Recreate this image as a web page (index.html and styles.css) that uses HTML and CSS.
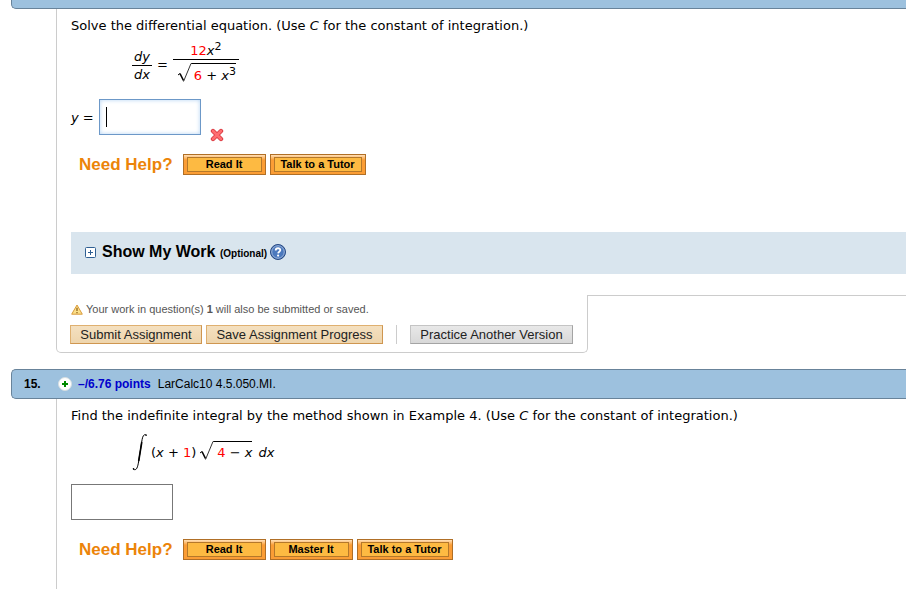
FILE: index.html
```html
<!DOCTYPE html>
<html lang="en">
<head>
    <meta charset="UTF-8">
    <meta name="viewport" content="width=device-width, initial-scale=1.0">
    <title>Assignment</title>
    <link rel="stylesheet" href="styles.css">
</head>
<body>
    <div class="bar bar-first"></div>
    <div class="question">
        <p class="prompt">Solve the differential equation. (Use <i>C</i> for the constant of integration.)</p>
        <div class="equation">
            <span class="fraction">
                <span class="top"><i>dy</i></span>
                <span class="bottom"><i>dx</i></span>
            </span>
            <span class="equals">=</span>
            <span class="fraction wide">
                <span class="top"><b>12</b><i>x</i><sup>2</sup></span>
                <span class="bottom">
                    <span class="root">
                        <svg width="14" height="20" viewBox="0 0 14 20"><path d="M0 12 2 10.500" stroke-width="1"/><path d="M2 10.500 5.500 17.500" stroke-width="1.600"/><path d="M5.500 18.500 13 .5H14" stroke-width=".8"/></svg>
                        <span class="radicand"><b>6</b> + <i>x</i><sup>3</sup></span>
                    </span>
                </span>
            </span>
        </div>
        <div class="answer">
            <label for="answer-y"><i>y</i> =</label>
            <input type="text" id="answer-y" class="focused" autofocus>
            <svg class="wrong" width="14" height="14" viewBox="0 0 14 14"><path d="M3 3 11 11M11 3 3 11" stroke="#d93a42" stroke-width="4.400" stroke-linecap="round"/><path d="M3 3 11 11M11 3 3 11" stroke="#ff6d70" stroke-width="2.600" stroke-linecap="round"/></svg>
        </div>
        <div class="help">
            <span class="help-title">Need Help?</span>
            <button class="help-button"><span>Read It</span></button>
            <button class="help-button tutor"><span>Talk to a Tutor</span></button>
        </div>
        <div class="show-work">
            <svg width="11" height="11" viewBox="0 0 11 11"><rect x=".5" y=".5" width="10" height="10" rx="1" fill="#fff" stroke="#2f5f92"/><path d="M3 5.500H8M5.500 3V8" stroke="#2f5f92"/></svg>
            <h2>Show My Work <small>(Optional)</small></h2>
            <svg width="16" height="16" viewBox="0 0 16 16"><circle cx="8" cy="8" r="7.500" fill="#355fa8" stroke="#274a84"/><circle cx="8" cy="8" r="6.300" fill="#4b78bd" stroke="#b9cbe6" stroke-width=".8"/><path d="M5.700 6.400C5.700 3.500 10.500 3.600 10.300 6.200 10.200 7.700 8.200 7.700 8.100 9.400" fill="none" stroke="#fff" stroke-width="1.800"/><circle cx="8.100" cy="11.600" r="1.100" fill="#fff"/></svg>
        </div>
    </div>
    <div class="footer">
        <div class="actions">
            <p class="notice">
                <svg width="12" height="11" viewBox="0 0 12 11"><path d="M6 1 11.300 10.200H.7Z" fill="#fbe08a" stroke="#d99a3a" stroke-linejoin="round"/><path d="M6 3.800V7M6 8V9.200" stroke="#8a5a14" stroke-width="1.200"/></svg>
                <span>Your work in question(s) <strong>1</strong> will also be submitted or saved.</span>
            </p>
            <div class="buttons">
                <button class="submit">Submit Assignment</button>
                <button class="submit save">Save Assignment Progress</button>
                <span class="divider"></span>
                <button class="practice">Practice Another Version</button>
            </div>
        </div>
        <div class="rest"></div>
    </div>

    <div class="bar">
        <span class="number">15.</span>
        <svg width="14" height="14" viewBox="0 0 14 14"><circle cx="7" cy="7" r="6.500" fill="#fff" stroke="#d5dde0"/><path d="M4 7H10M7 4V10" stroke="#008a00" stroke-width="2"/></svg>
        <a href="#" class="points">–/6.76 points</a>
        <span>LarCalc10 4.5.050.MI.</span>
    </div>
    <div class="question last">
        <p class="prompt">Find the indefinite integral by the method shown in Example 4. (Use <i>C</i> for the constant of integration.)</p>
        <div class="equation integral">
            <svg width="16" height="38" viewBox="0 0 16 38"><path d="M14.500 2.500C11.500 0 10.400 4 9.700 9L6.700 28C5.800 34 4.600 38.500 1 36" stroke-width="1"/><path d="M9.800 9 6.700 28" stroke-width="1.600"/><circle cx="14" cy="2" r=".8" fill="#000" stroke="none"/><circle cx="1.500" cy="35.800" r=".8" fill="#000" stroke="none"/></svg>
            <span class="integrand">(<i>x</i> + <b>1</b>)</span>
            <span class="root">
                <svg width="14" height="20" viewBox="0 0 14 20"><path d="M0 12 2 10.500" stroke-width="1"/><path d="M2 10.500 5.500 17.500" stroke-width="1.600"/><path d="M5.500 18.500 13 .5H14" stroke-width=".8"/></svg>
                <span class="radicand"><b>4</b> − <i>x</i></span>
            </span>
            <i class="dx">dx</i>
        </div>
        <div class="answer">
            <input type="text" aria-label="Answer">
        </div>
        <div class="help">
            <span class="help-title">Need Help?</span>
            <button class="help-button"><span>Read It</span></button>
            <button class="help-button"><span>Master It</span></button>
            <button class="help-button tutor"><span>Talk to a Tutor</span></button>
        </div>
    </div>
</body>
</html>
```
FILE: styles.css
```css
* { box-sizing: border-box; }
body {
    margin: 0;
    padding-left: 11px;
    min-height: 100vh;
    display: flex;
    flex-direction: column;
    background: #fff;
    color: #000;
    font-family: "Liberation Sans", Arial, sans-serif;
    font-size: 12px;
}
p, h2 { margin: 0; }
svg { flex: none; }
button {
    font-family: inherit;
    margin: 0;
    padding: 0;
    white-space: nowrap;
}

/* question header */
.bar {
    display: flex;
    align-items: center;
    flex: none;
    height: 30px;
    padding-left: 12px;
    background: #9dc1de;
    border: 1px solid #68839a;
    border-right: 0;
    border-radius: 5px 0 0 5px;
}
.bar-first { margin-top: -21px; }
.number {
    width: 34px;
    font-weight: bold;
}
.points {
    margin: 0 7px 0 6px;
    color: #0000cc;
    font-weight: bold;
    text-decoration: none;
}

.question {
    margin-left: 45px;
    padding: 8px 0 21px 14px;
    border-left: 1px solid #ccc;
}
.last { flex: 1; }
.prompt, .equation, .answer {
    font-family: Verdana, "DejaVu Sans", sans-serif;
    font-size: 13px;
}
.prompt { line-height: 18px; }

/* math */
.equation {
    display: flex;
    align-items: flex-end;
    margin: 7px 0 16px 61px;
}
.equation b {
    color: #f00;
    font-weight: normal;
}
.equation svg {
    fill: none;
    stroke: #000;
}
.fraction {
    display: flex;
    flex-direction: column;
    text-align: center;
    line-height: 16px;
}
.fraction .top {
    padding: 1px 2px 0;
    border-bottom: 1px solid #000;
}
.fraction .bottom { padding-top: 1px; }
.equals {
    padding: 0 5px;
    line-height: 36px;
}
.wide .bottom { padding: 3px 3px 0 5px; }
.root { display: flex; }
.radicand {
    padding: 4px 0 0 2px;
    border-top: 1px solid #000;
    line-height: 15px;
}
sup {
    font-size: 11px;
    line-height: 0;
    vertical-align: 5px;
}
.integral {
    align-items: center;
    height: 38px;
    margin-top: 8px;
    margin-bottom: 13px;
}
.integrand { padding: 0 4px 0 3px; }
.integral .root { margin-bottom: 2px; }
.integral .radicand {
    padding-top: 3px;
    padding-left: 3px;
}
.dx { padding-left: 6px; }

.answer {
    display: flex;
    align-items: center;
    height: 36px;
}
.answer label { margin-right: 5px; }
.answer input {
    width: 102px;
    height: 36px;
    padding: 0 6px;
    border: 1px solid #777;
    outline: 0;
    font-size: 18px;
}
.answer .focused {
    border-color: #6c98c8;
    box-shadow: inset 0 0 4px #b4d4f4;
    caret-color: transparent;
    background: linear-gradient(#000, #000) 6px 7px / 1px 20px no-repeat;
}
.wrong {
    align-self: flex-end;
    margin: 0 0 -7px 9px;
    fill: none;
}

.help {
    display: flex;
    align-items: center;
    gap: 4px;
    margin: 19px 0 0 8px;
}
.help-title {
    margin-right: 6px;
    color: #ec8409;
    font-size: 17px;
    font-weight: bold;
    line-height: 21px;
}
.help-button {
    width: 83px;
    height: 21px;
    padding: 2px 3px;
    border: 1px solid #b06f26;
    background: linear-gradient(#ffe0b8, #fb9d35 5px);
    color: #000;
    font-size: 11px;
    font-weight: bold;
}
.help-button span {
    display: block;
    line-height: 13px;
    border: 1px solid #b5782a;
    background: #fdba42;
}
.tutor { width: 96px; }

.show-work {
    display: flex;
    align-items: center;
    height: 42px;
    margin-top: 57px;
    padding: 0 0 2px 14px;
    background: #d9e5ee;
}
.show-work h2 {
    margin: 0 3px 0 6px;
    font-size: 16px;
}
.show-work small { font-size: 10px; }

/* submit tab */
.footer {
    display: flex;
    flex: none;
    margin: 0 0 16px 45px;
}
.actions {
    padding: 6px 14px 8px 13px;
    border: solid #ccc;
    border-width: 0 1px 1px 1px;
    border-radius: 0 0 5px 5px;
}
.rest {
    flex: 1;
    border-top: 1px solid #ccc;
}
.notice {
    display: flex;
    align-items: center;
    gap: 3px;
    margin: 0 0 7px 1px;
    color: #555;
    font-size: 11px;
    line-height: 17px;
}
.buttons { display: flex; }
.submit, .practice {
    height: 19px;
    border: 1px solid #dfb070;
    border-right-color: #cf9650;
    border-bottom-color: #cf9650;
    background: linear-gradient(#f4e0c0, #eed5ad);
    color: #222;
    font-size: 13px;
    line-height: 17px;
}
.submit { width: 132px; }
.save {
    width: 177px;
    margin-left: 4px;
}
.divider {
    margin: 0 13px;
    border-left: 1px solid #ccc;
}
.practice {
    width: 163px;
    border-color: #c4c4c4 #a4a4a4 #a4a4a4 #c4c4c4;
    background: linear-gradient(#e8e8e8, #d8d8d8);
}
```
